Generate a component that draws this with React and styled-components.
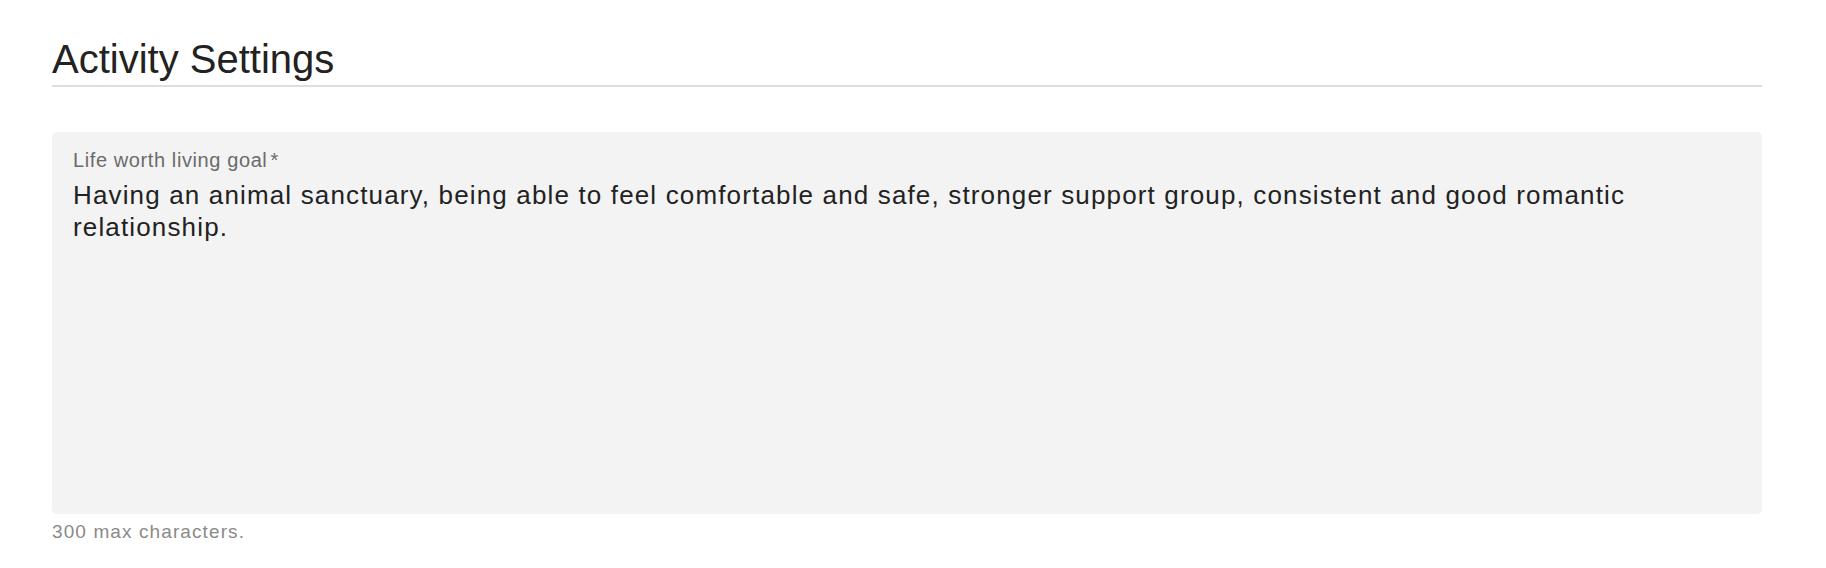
import styled, { createGlobalStyle } from 'styled-components'

const GlobalStyle = createGlobalStyle`
  body {
    margin: 0;
    background: #ffffff;
    font-family: 'Liberation Sans', Arial, sans-serif;
  }
`;

const Page = styled.div`
  width: 1710px;
  margin-left: 52px;
  padding-top: 36px;
`;

const Title = styled.h1`
  margin: 0;
  font-size: 40px;
  font-weight: 400;
  line-height: 46px;
  color: #222222;
  padding-bottom: 3px;
  border-bottom: 2px solid #dedede;
`;

const Field = styled.div`
  margin-top: 45px;
  height: 382px;
  box-sizing: border-box;
  padding: 16px 21px 12px;
  background: #f3f3f3;
  border-radius: 5px;
  display: flex;
  flex-direction: column;
  gap: 7px;
`;

const Label = styled.label`
  font-size: 20px;
  line-height: 24px;
  letter-spacing: 0.6px;
  color: #6b6b6b;
`;

const Required = styled.span`
  margin-left: 3px;
`;

const TextArea = styled.textarea`
  flex: 1;
  margin: 0;
  padding: 0;
  border: none;
  outline: none;
  resize: none;
  background: transparent;
  font-family: 'Liberation Sans', Arial, sans-serif;
  font-size: 26px;
  line-height: 32px;
  letter-spacing: 1.15px;
  color: #222222;
`;

const Helper = styled.div`
  margin-top: 7px;
  font-size: 19px;
  line-height: 22px;
  color: #8a8a8a;
  letter-spacing: 1.1px;
`;

function App() {
  return (
    <>
      <GlobalStyle />
      <Page>
        <Title>Activity Settings</Title>
        <Field>
          <Label htmlFor="goal">
            Life worth living goal<Required>*</Required>
          </Label>
          <TextArea
            id="goal"
            readOnly
            defaultValue="Having an animal sanctuary, being able to feel comfortable and safe, stronger support group, consistent and good romantic relationship."
          />
        </Field>
        <Helper>300 max characters.</Helper>
      </Page>
    </>
  )
}

export default App
